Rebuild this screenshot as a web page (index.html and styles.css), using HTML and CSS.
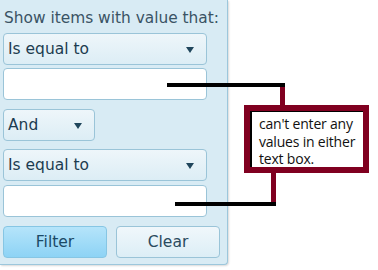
FILE: index.html
```html
<!DOCTYPE html>
<html>
<head>
<meta charset="utf-8">
<link rel="stylesheet" href="styles.css">
</head>
<body>
<div class="panel">
  <div class="label">Show items with value that:</div>
  <div class="select wide"><span>Is equal to</span><span class="arrow"></span></div>
  <div class="input first"></div>
  <div class="select small"><span>And</span><span class="arrow"></span></div>
  <div class="select wide second"><span>Is equal to</span><span class="arrow"></span></div>
  <div class="input last"></div>
  <div class="buttons">
    <div class="btn primary">Filter</div>
    <div class="btn">Clear</div>
  </div>
</div>
<div class="line l1"></div>
<div class="vline v1"></div>
<div class="note">can't enter any<br>values in either<br>text box.</div>
<div class="vline v2"></div>
<div class="line l2"></div>
</body>
</html>
```
FILE: styles.css
```css
html, body { margin: 0; padding: 0; background: #fff; }
body { width: 378px; height: 270px; overflow: hidden; position: relative; font-family: "DejaVu Sans", sans-serif; }
.panel {
  width: 228px;
  height: 265px;
  box-sizing: border-box;
  padding: 0 0 0 3px;
  background: #d8ebf4;
  border-right: 1px solid #9cc7dc;
  border-bottom: 1px solid #9cc7dc;
  border-bottom-right-radius: 4px;
  box-shadow: 1px 1px 2px rgba(0,0,0,0.15);
  display: flex;
  flex-direction: column;
}
.label { height: 33px; box-sizing: border-box; padding: 9px 0 0 1px; font-size: 15.4px; color: #3a5364; line-height: 18px; white-space: nowrap; }
.select {
  height: 32px; box-sizing: border-box;
  border: 1px solid #9ac4d8; border-radius: 4px;
  background: linear-gradient(#eef6fa, #dcedf5);
  display: flex; align-items: center; justify-content: space-between;
  padding: 0 12px 0 4px;
  font-size: 15.5px; color: #1c3c50;
}
.select.wide { width: 204px; }
.select.small { width: 92px; margin-top: 9px; }
.select.second { margin-top: 8px; }
.arrow { width: 0; height: 0; border-left: 4px solid transparent; border-right: 4px solid transparent; border-top: 6px solid #20465c; margin-top: 2px; }
.input { width: 204px; height: 32px; box-sizing: border-box; background: #fff; border: 1px solid #9ac4d8; border-radius: 4px; }
.input.first { margin-top: 3px; }
.input.last { margin-top: 4px; }
.buttons { display: flex; gap: 9px; margin-top: 9px; }
.btn { width: 104px; height: 32px; box-sizing: border-box; border: 1px solid #9ac4d8; border-radius: 4px; background: linear-gradient(#f0f7fb, #dceef6); display: flex; align-items: center; justify-content: center; font-size: 15.5px; color: #2a4a5e; }
.btn.primary { background: linear-gradient(#b5e4fa, #8dd3f5); border-color: #86c6e4; color: #1b4a66; }
.line { position: absolute; background: #000; height: 4px; }
.l1 { left: 167px; top: 83px; width: 118px; }
.l2 { left: 175px; top: 202px; width: 101px; }
.vline { position: absolute; background: #800020; width: 5px; }
.v1 { left: 280px; top: 87px; height: 19px; }
.v2 { left: 271px; top: 172px; height: 32px; }
.note {
  position: absolute; left: 244px; top: 105px; width: 125px; height: 68px; box-sizing: border-box;
  border: 6px solid #800020; background: #fff;
  box-shadow: inset 2px 1px 0 #000;
  padding: 4px 0 0 9px;
  white-space: nowrap;
  font-family: "Open Sans", sans-serif; font-size: 14px; letter-spacing: -0.2px; line-height: 17.5px; color: #111;
}
```
